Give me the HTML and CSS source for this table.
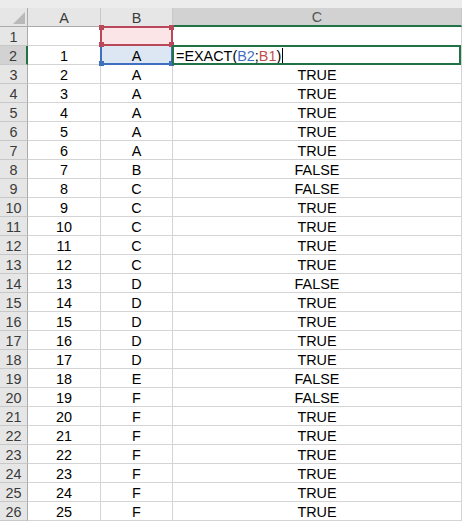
FILE: index.html
```html
<!DOCTYPE html>
<html>
<head>
<meta charset="utf-8">
<link rel="stylesheet" href="styles.css">
</head>
<body>
<div class="strip"></div>
<div class="sheet">
  <div class="hd corner"><svg width="12" height="12" viewBox="0 0 12 12"><polygon points="12,0 12,12 0,12" fill="#b9b9b9"/></svg></div>
  <div class="hd col">A</div>
  <div class="hd col">B</div>
  <div class="hd col sel-col">C</div>

  <div class="hd row">1</div><div class="c"></div><div class="c ref-red"><div class="box red"><i class="k tl"></i><i class="k tr"></i><i class="k bl"></i><i class="k br"></i></div></div><div class="c"></div>
  <div class="hd row sel-row">2</div><div class="c">1</div><div class="c ref-blue">A<div class="box blue"><i class="k bl"></i><i class="k br"></i></div></div><div class="c edit"><span class="f">=EXACT(<span class="fb">B2</span>;<span class="fr">B1</span>)</span><span class="caret"></span><div class="gbox"></div></div>
  <div class="hd row">3</div><div class="c">2</div><div class="c">A</div><div class="c">TRUE</div>
  <div class="hd row">4</div><div class="c">3</div><div class="c">A</div><div class="c">TRUE</div>
  <div class="hd row">5</div><div class="c">4</div><div class="c">A</div><div class="c">TRUE</div>
  <div class="hd row">6</div><div class="c">5</div><div class="c">A</div><div class="c">TRUE</div>
  <div class="hd row">7</div><div class="c">6</div><div class="c">A</div><div class="c">TRUE</div>
  <div class="hd row">8</div><div class="c">7</div><div class="c">B</div><div class="c">FALSE</div>
  <div class="hd row">9</div><div class="c">8</div><div class="c">C</div><div class="c">FALSE</div>
  <div class="hd row">10</div><div class="c">9</div><div class="c">C</div><div class="c">TRUE</div>
  <div class="hd row">11</div><div class="c">10</div><div class="c">C</div><div class="c">TRUE</div>
  <div class="hd row">12</div><div class="c">11</div><div class="c">C</div><div class="c">TRUE</div>
  <div class="hd row">13</div><div class="c">12</div><div class="c">C</div><div class="c">TRUE</div>
  <div class="hd row">14</div><div class="c">13</div><div class="c">D</div><div class="c">FALSE</div>
  <div class="hd row">15</div><div class="c">14</div><div class="c">D</div><div class="c">TRUE</div>
  <div class="hd row">16</div><div class="c">15</div><div class="c">D</div><div class="c">TRUE</div>
  <div class="hd row">17</div><div class="c">16</div><div class="c">D</div><div class="c">TRUE</div>
  <div class="hd row">18</div><div class="c">17</div><div class="c">D</div><div class="c">TRUE</div>
  <div class="hd row">19</div><div class="c">18</div><div class="c">E</div><div class="c">FALSE</div>
  <div class="hd row">20</div><div class="c">19</div><div class="c">F</div><div class="c">FALSE</div>
  <div class="hd row">21</div><div class="c">20</div><div class="c">F</div><div class="c">TRUE</div>
  <div class="hd row">22</div><div class="c">21</div><div class="c">F</div><div class="c">TRUE</div>
  <div class="hd row">23</div><div class="c">22</div><div class="c">F</div><div class="c">TRUE</div>
  <div class="hd row">24</div><div class="c">23</div><div class="c">F</div><div class="c">TRUE</div>
  <div class="hd row">25</div><div class="c">24</div><div class="c">F</div><div class="c">TRUE</div>
  <div class="hd row">26</div><div class="c">25</div><div class="c">F</div><div class="c">TRUE</div>
</div>
</body>
</html>
```

FILE: styles.css
```css
html, body {
  margin: 0;
  padding: 0;
  background: #ffffff;
}
body {
  width: 462px;
  height: 522px;
  overflow: hidden;
  font-family: "Liberation Sans", Arial, sans-serif;
  font-size: 14.4px;
  color: #000;
}
.strip {
  height: 8px;
  background: #ececec;
}
.sheet {
  display: grid;
  grid-template-columns: 28px 73px 72px 289px;
  grid-auto-rows: 19px;
}
.sheet > div {
  box-sizing: border-box;
  border-right: 1px solid #d4d4d4;
  border-bottom: 1px solid #d4d4d4;
  display: flex;
  align-items: flex-end;
  justify-content: center;
  line-height: 16px;
  position: relative;
  white-space: nowrap;
}
.sheet > .hd {
  background: #e6e6e6;
  color: #3a3a3a;
  border-right-color: #c8c8c8;
  border-bottom-color: #c8c8c8;
}
.sheet > .col {
  border-bottom-color: #ababab;
}
.sheet > .row {
  border-right-color: #ababab;
}
.sheet > .corner {
  border-right-color: #ababab;
  border-bottom-color: #ababab;
  justify-content: flex-end;
  padding: 0 2px 2px 0;
}
.corner svg {
  display: block;
}
.sheet > .sel-col {
  background: #d2d2d2;
  color: #555;
  border-bottom: 2px solid #217346;
}
.sheet > .sel-row {
  background: #d2d2d2;
  border-right: 2px solid #217346;
}
.sheet > .ref-red {
  background: #fbe5e7;
}
.sheet > .ref-blue {
  background: #dde7f3;
}
.box {
  position: absolute;
  left: -1px;
  top: -1px;
  right: -1px;
  bottom: -1px;
  border: 2px solid;
  pointer-events: none;
}
.box.red {
  border-color: #b9485a;
  z-index: 3;
}
.box.blue {
  border-color: #3f6fbf;
  border-top-color: transparent;
  z-index: 2;
}
.k {
  position: absolute;
  width: 5px;
  height: 5px;
  background: inherit;
}
.red .k { background: #b9485a; }
.blue .k { background: #3f6fbf; }
.k.tl { left: -3px; top: -3px; }
.k.tr { right: -3px; top: -3px; }
.k.bl { left: -3px; bottom: -3px; }
.k.br { right: -3px; bottom: -3px; }
.sheet > .edit {
  justify-content: flex-start;
  padding-left: 3px;
}
.fb { color: #3f6fbf; }
.fr { color: #c0504d; }
.caret {
  display: inline-block;
  width: 1px;
  height: 16px;
  background: #000;
  margin-left: 1px;
  align-self: flex-end;
}
.gbox {
  position: absolute;
  left: -1px;
  top: -1px;
  right: 0;
  bottom: -1px;
  border: 2px solid #217346;
  z-index: 4;
}
```
